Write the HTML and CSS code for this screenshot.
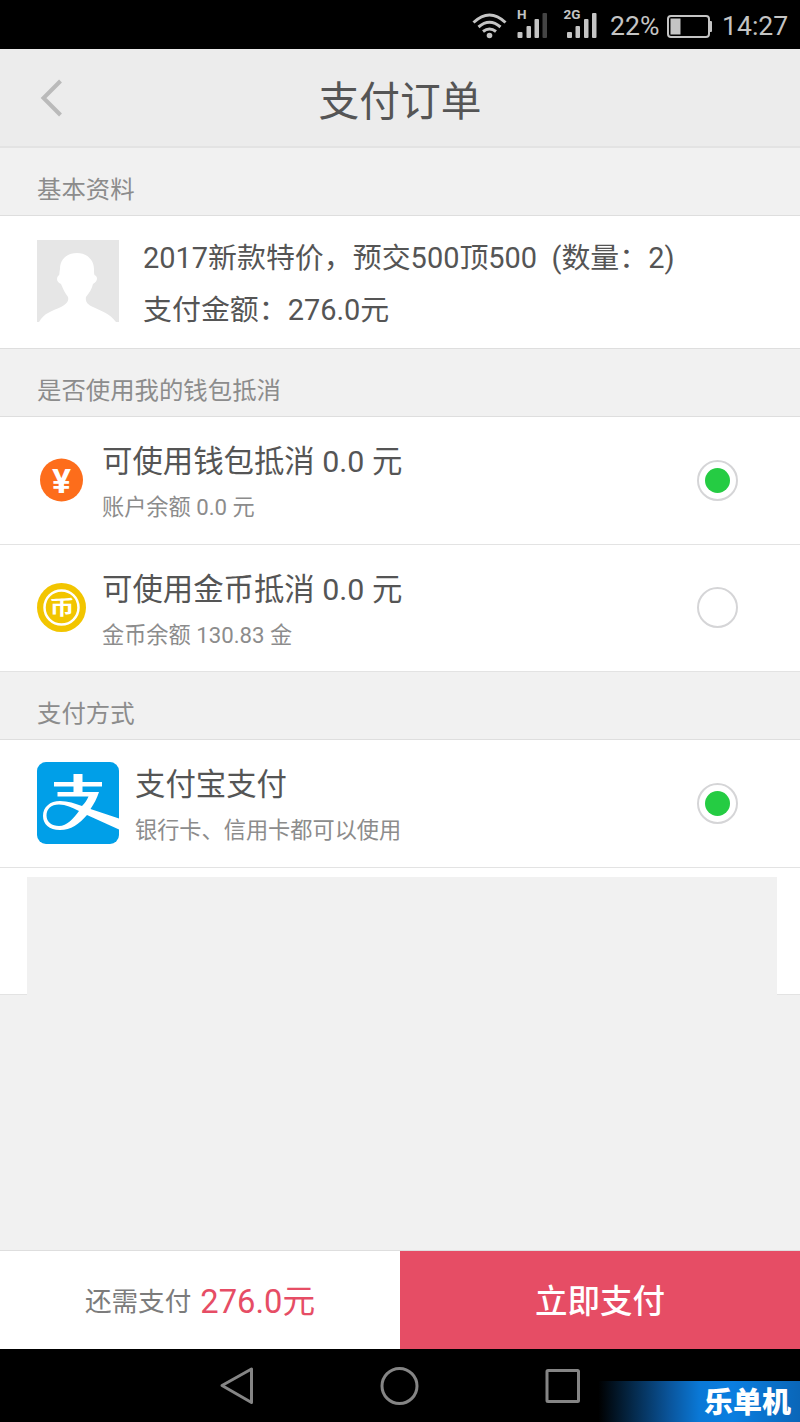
FILE: index.html
```html
<!DOCTYPE html>
<html lang="zh-CN">
<head>
<meta charset="utf-8">
<title>支付订单</title>
<link rel="stylesheet" href="styles.css">
</head>
<body>
<div class="screen">
  <div class="status">
    <svg class="status-icons" width="136" height="48" viewBox="0 0 136 48">
      <g fill="none" stroke="#c4c4c4" stroke-width="3">
        <path d="M10.500 21.500Q26.500 6.500 42.500 21.500"/>
        <path d="M15.500 26Q26.500 16.500 37.500 26"/>
        <path d="M20 30.500Q26.500 25.500 33 30.500"/>
      </g>
      <circle cx="26.500" cy="34.500" r="2.800" fill="#c4c4c4"/>
      <g fill="#c4c4c4">
        <rect x="54.500" y="31" width="5" height="6" rx="1"/>
        <rect x="63.500" y="25" width="4.500" height="12" rx="1"/>
        <rect x="71.500" y="18" width="4.500" height="19" rx="1"/>
        <rect x="79.500" y="12" width="4.500" height="25" rx="1" fill="#444"/>
        <rect x="104" y="31" width="5" height="6" rx="1"/>
        <rect x="112.500" y="25" width="4.500" height="12" rx="1"/>
        <rect x="121" y="18" width="4.500" height="19" rx="1"/>
        <rect x="129" y="12" width="4.500" height="25" rx="1"/>
      </g>
      <text class="net" x="54" y="18">H</text>
      <text class="net" x="100.500" y="18">2G</text>
    </svg>
    <span class="percent">22%</span>
    <svg class="battery" width="48" height="48" viewBox="0 0 48 48">
      <rect x="3" y="15" width="41" height="21" rx="3" fill="none" stroke="#c4c4c4" stroke-width="2"/>
      <rect x="5.500" y="17.500" width="10" height="16" fill="#c4c4c4"/>
      <rect x="44" y="20" width="3" height="11" rx="1" fill="#c4c4c4"/>
    </svg>
    <span class="clock">14:27</span>
  </div>

  <header class="header">
    <svg class="back" width="24" height="38" viewBox="0 0 24 38"><path d="M20.500 2L3.500 19L20.500 36" fill="none" stroke="#bababa" stroke-width="4"/></svg>
    <h1 class="title">支付订单</h1>
  </header>

  <h2 class="section">基本资料</h2>
  <div class="order">
    <svg class="avatar" width="82" height="82" viewBox="0 0 82 82">
      <rect width="82" height="82" fill="#e6e6e6"/>
      <path fill="#fff" d="M2 82C7 73 15 71 24 67C30 64 32 61 31 57C28 53 26 49 24 44C20 42 19 39 21 36C23 35 22 34 23 29C23 19 30 13 40 13C50 13 57 20 57 29C57 34 57 35 59 36C61 38 60 42 56 44C55 49 52 53 49 57C48 62 51 65 56 67C65 71 73 74 79 82Z"/>
    </svg>
    <div class="order-text">
      <p class="order-line">2017新款特价，预交500顶500&nbsp; (数量：2)</p>
      <p class="order-line">支付金额：276.0元</p>
    </div>
  </div>

  <h2 class="section">是否使用我的钱包抵消</h2>
  <div class="row">
    <svg class="coin" width="49" height="49" viewBox="0 0 49 49">
      <circle cx="24.500" cy="24" r="21.500" fill="#fd6d1b"/>
      <text class="yen" x="24.500" y="36.500" textLength="19" lengthAdjust="spacingAndGlyphs">¥</text>
    </svg>
    <div class="row-text">
      <p class="name">可使用钱包抵消 0.0 元</p>
      <p class="note">账户余额 0.0 元</p>
    </div>
    <span class="radio checked"></span>
  </div>
  <div class="row">
    <svg class="coin" width="49" height="49" viewBox="0 0 49 49">
      <circle cx="24.500" cy="24.500" r="24.500" fill="#f2c500"/>
      <circle cx="24.500" cy="24.500" r="17" fill="none" stroke="#fff" stroke-width="2.500"/>
      <text class="bi" x="25" y="31.500" textLength="25" lengthAdjust="spacingAndGlyphs">币</text>
    </svg>
    <div class="row-text">
      <p class="name">可使用金币抵消 0.0 元</p>
      <p class="note">金币余额 130.83 金</p>
    </div>
    <span class="radio"></span>
  </div>

  <h2 class="section">支付方式</h2>
  <div class="row">
    <svg class="alipay" width="82" height="82" viewBox="0 0 82 82">
      <rect width="82" height="82" rx="9" fill="#009fe8"/>
      <path fill="#fff" d="M36.500 12H45.500V20H65V24.500H45.500V30H62C60 36 57 42 53.500 47L82 56.500V67.500L50 53C42 62 34 68 23 68C12 68 6 62 6 54C6 45 13 39 23 39C31 39 38 41.500 45 44C48 41 50 38 51.500 34.500H20.500V30H36.500V24.500H17V20H36.500ZM42 49C35 45.500 29 42.500 22 42.500C14 42.500 9.500 47 9.500 53.500C9.500 60 15 64 22 64C30 64 36 57 42 49Z"/>
    </svg>
    <div class="row-text">
      <p class="name">支付宝支付</p>
      <p class="note">银行卡、信用卡都可以使用</p>
    </div>
    <span class="radio checked"></span>
  </div>
  <div class="row empty"><div class="cover"></div></div>

  <div class="space"></div>

  <footer class="footer">
    <div class="due"><span class="due-label">还需支付</span><span class="due-sum">276.0元</span></div>
    <button class="pay">立即支付</button>
  </footer>

  <nav class="nav">
    <svg width="800" height="73" viewBox="0 0 800 73" fill="none" stroke="#858585" stroke-width="3" stroke-linejoin="round">
      <path d="M222 36.500L251.500 20V53.500Z"/>
      <circle cx="399.500" cy="37" r="17.500"/>
      <rect x="547" y="21.500" width="31.500" height="31" rx="1"/>
    </svg>
    <div class="mark">乐单机</div>
  </nav>
</div>
</body>
</html>
```
FILE: styles.css
```css
* { box-sizing: border-box; margin: 0; padding: 0; }
body { font-family: Roboto, "Noto Sans CJK SC", sans-serif; color: #555; background: #f1f1f1; }
svg { display: block; flex: none; }
.screen { width: 800px; height: 1422px; display: flex; flex-direction: column; overflow: hidden; }

.status { height: 49px; flex: none; background: #000; color: #c4c4c4; display: flex; align-items: center; padding-left: 463px; font-size: 26.6px; white-space: nowrap; }
.net { font-size: 13.500px; font-weight: 700; fill: #c4c4c4; }
.percent { width: 66px; padding-left: 11px; padding-top: 1px; }
.clock { padding-left: 9px; padding-top: 1px; }

.header { height: 99px; flex: none; background: #ececec; border-bottom: 2px solid #e3e3e3; display: grid; grid-template-columns: 90px 1fr 90px; align-items: center; }
.back { margin-left: 40px; }
.title { font-size: 40.7px; font-weight: 400; line-height: 60px; text-align: center; padding-top: 9px; }

.section { height: 68px; flex: none; padding: 16px 37px 0; font-size: 24.4px; font-weight: 400; line-height: 52px; color: #8c8c8c; border-bottom: 1px solid #dedede; }
.order { height: 133px; flex: none; background: #fff; border-bottom: 1px solid #dedede; display: flex; align-items: flex-start; padding: 24px 37px; gap: 24px; }
.order-text { margin-top: -8px; }
.order-line { font-size: 28.950px; line-height: 52px; white-space: nowrap; }

.row { height: 127.500px; flex: none; background: #fff; border-bottom: 1px solid #e3e3e3; display: flex; align-items: center; padding: 0 62px 0 37px; }
.row-text { flex: 1; padding: 8px 0 0 16px; }
.name { font-size: 30.4px; line-height: 46px; }
.note { font-size: 22.2px; line-height: 44px; color: #8c8c8c; }
.yen { font-size: 34px; font-weight: 700; fill: #fff; text-anchor: middle; }
.bi { font-size: 20px; font-weight: 700; fill: #fff; text-anchor: middle; }
.radio { width: 41px; height: 41px; border: 2px solid #d5d5d7; border-radius: 50%; display: flex; align-items: center; justify-content: center; }
.checked::after { content: ""; width: 25px; height: 25px; border-radius: 50%; background: #25cc43; }
.empty { padding: 0 23px 0 27px; align-items: flex-end; }
.cover { flex: 1; height: 118px; margin-bottom: -1px; background: #f1f1f1; }
.space { flex: 1; }

.footer { height: 99px; flex: none; display: grid; grid-template-columns: 1fr 1fr; border-top: 1px solid #dedede; }
.due { background: #fff; display: flex; align-items: center; justify-content: center; gap: 9px; padding-top: 4px; line-height: 50px; }
.due-label { font-size: 26.600px; color: #7c7c7c; }
.due-sum { font-size: 32.700px; color: #e64d65; }
.pay { border: 0; background: #e64d65; color: #fff; font: 500 32.500px/50px Roboto, "Noto Sans CJK SC", sans-serif; padding-top: 4px; }

.nav { height: 73px; flex: none; background: #000; position: relative; }
.mark { position: absolute; right: 0; bottom: 0; width: 210px; height: 41px; padding: 3px 9px 0 0; text-align: right; font-size: 29px; font-weight: 900; line-height: 38px; color: #fff; background: linear-gradient(90deg, #000 4%, #04233f 18%, #0a559c 38%, #0a78d6 52%, #0a7ee0 68%, #0a66b8); }
```
